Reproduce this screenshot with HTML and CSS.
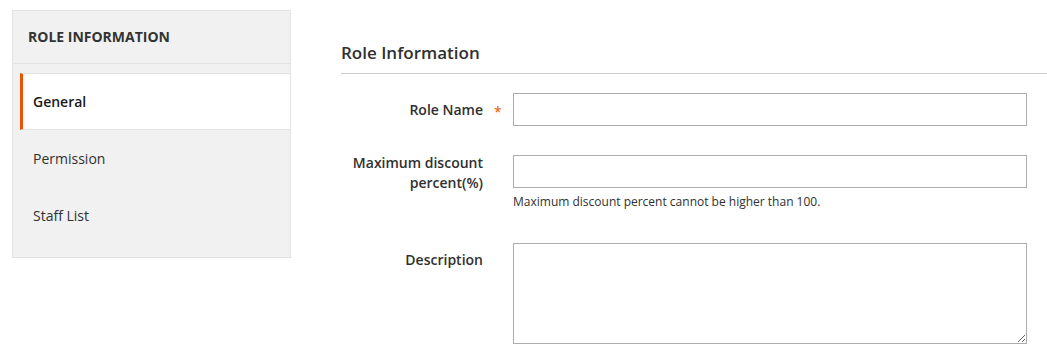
FILE: index.html
```html
<!DOCTYPE html>
<html>
<head>
<meta charset="utf-8">
<link rel="stylesheet" href="styles.css">
</head>
<body>
<div class="page">
  <aside class="nav">
    <div class="nav-title">ROLE INFORMATION</div>
    <ul class="nav-items">
      <li class="nav-item active">General</li>
      <li class="nav-item">Permission</li>
      <li class="nav-item">Staff List</li>
    </ul>
  </aside>
  <main class="main">
    <h2 class="legend">Role Information</h2>
    <div class="field">
      <label class="label required"><span>Role Name</span></label>
      <div class="control"><input class="input" type="text"></div>
    </div>
    <div class="field">
      <label class="label multiline"><span>Maximum discount percent(%)</span></label>
      <div class="control">
        <input class="input" type="text">
        <div class="note">Maximum discount percent cannot be higher than 100.</div>
      </div>
    </div>
    <div class="field field-desc">
      <label class="label"><span>Description</span></label>
      <div class="control"><textarea class="textarea"></textarea></div>
    </div>
  </main>
</div>
</body>
</html>
```
FILE: styles.css
```css
* { box-sizing: border-box; }
body {
  margin: 0;
  font-family: "Open Sans", "Liberation Sans", sans-serif;
  font-size: 14px;
  color: #303030;
  background: #fff;
}
.page {
  display: flex;
  align-items: flex-start;
  padding: 10px 0 0 12px;
}
.nav {
  width: 279px;
  flex: none;
  background: #f1f1f1;
  border: 1px solid #e3e3e3;
  padding-bottom: 13px;
}
.nav-title {
  height: 53px;
  display: flex;
  align-items: center;
  padding: 0 15px 2px;
  font-weight: 700;
  font-size: 14px;
  color: #333;
  border-bottom: 1px solid #e3e3e3;
}
.nav-items {
  list-style: none;
  margin: 9px 0 0 7px;
  padding: 0;
}
.nav-item {
  height: 57px;
  display: flex;
  align-items: center;
  padding-left: 10px;
  border-left: 3px solid transparent;
  color: #303030;
}
.nav-item.active {
  background: #fff;
  border-left-color: #eb5202;
  border-top: 1px solid #e3e3e3;
  border-bottom: 1px solid #e3e3e3;
  font-weight: 600;
  color: #1a1a1a;
}
.main {
  flex: 1;
  margin-left: 50px;
  padding-top: 31px;
}
.legend {
  margin: 0;
  font-size: 17px;
  font-weight: 600;
  line-height: 24px;
  color: #303030;
  padding-bottom: 8px;
  border-bottom: 1px solid #cccccc;
}
.field {
  display: flex;
  align-items: flex-start;
  margin-top: 19px;
  padding-right: 20px;
}
.field + .field { margin-top: 29px; }
.field.field-desc { margin-top: 33px; }
.label {
  width: 172px;
  flex: none;
  padding-right: 30px;
  padding-top: 7px;
  text-align: right;
  font-weight: 600;
  line-height: 20px;
  position: relative;
}
.label.multiline {
  padding-top: 0;
  margin-top: -2px;
}
.label span { display: inline-block; max-width: 135px; }
.label.required::after {
  content: "*";
  position: absolute;
  left: 153px;
  top: 9px;
  font-size: 14px;
  font-weight: 400;
  color: #eb5202;
}
.control { flex: 1; }
.input {
  display: block;
  width: 100%;
  height: 33px;
  border: 1px solid #adadad;
  background: #fff;
  font: inherit;
  padding: 0 10px;
  outline: none;
}
.note {
  font-size: 12px;
  color: #303030;
  margin-top: 6px;
  line-height: 16px;
}
.textarea {
  display: block;
  width: 100%;
  height: 101px;
  border: 1px solid #adadad;
  font: inherit;
  padding: 8px 10px;
  outline: none;
  resize: vertical;
}
```
